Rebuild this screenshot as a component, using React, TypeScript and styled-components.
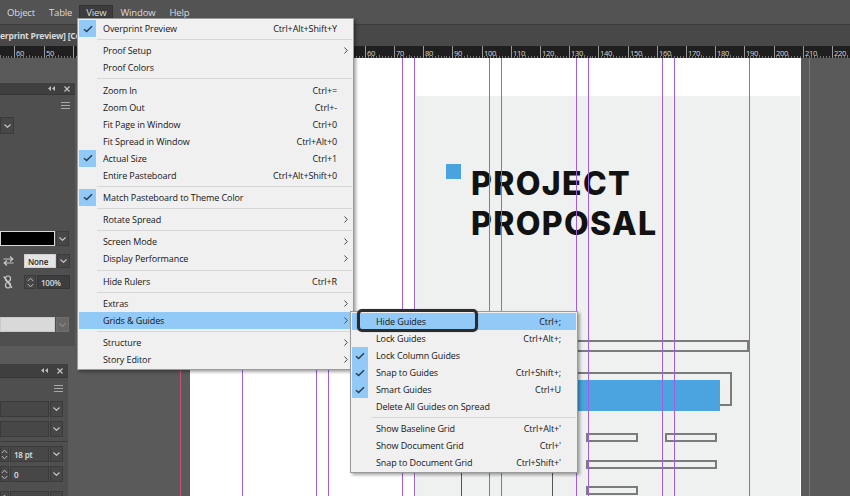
import React from "react";
import styled, { createGlobalStyle } from "styled-components";

const UI_FONT = `"Open Sans", "Noto Sans", "Liberation Sans", Arial, sans-serif`;

const GlobalStyle = createGlobalStyle`
  html, body { margin: 0; padding: 0; background: #535353; overflow: hidden; }
  #root { width: 850px; height: 496px; }
  * { box-sizing: border-box; }
`;

const Root = styled.div`
  position: relative;
  width: 850px;
  height: 496px;
  overflow: hidden;
  display: flex;
  flex-direction: column;
  font-family: ${UI_FONT};
`;

/* ---------- Menu bar ---------- */
const MenuBar = styled.div`
  height: 24px;
  flex: none;
  display: flex;
  align-items: center;
  background: #535353;
  color: #dcdcdc;
  font-size: 9.5px;
  letter-spacing: -0.15px;
`;
const MenuBarItem = styled.div<{ $active?: boolean }>`
  height: 16px;
  display: flex;
  align-items: center;
  padding: 0 6px;
  margin-top: 1px;
  border: 1px solid ${(p) => (p.$active ? "#333" : "transparent")};
  background: ${(p) => (p.$active ? "#3c3c3c" : "transparent")};
`;

/* ---------- Tab strip ---------- */
const TabStrip = styled.div`
  height: 22px;
  flex: none;
  background: #484848;
  border-top: 1px solid #3d3d3d;
  display: flex;
  align-items: center;
  overflow: hidden;
`;
const TabTitle = styled.span`
  font-weight: 700;
  font-size: 8.6px;
  letter-spacing: -0.25px;
  color: #d8d8d8;
  white-space: nowrap;
`;

/* ---------- Ruler ---------- */
const RulerBar = styled.div`
  height: 12px;
  flex: none;
  background: #1f1f1f;
  overflow: hidden;
  svg { display: block; }
`;

function Ruler() {
  const majors: React.ReactNode[] = [];
  const minors: React.ReactNode[] = [];
  for (let k = -6; k <= 22; k++) {
    const x = Math.round(189.5 + k * 29.2) + 0.5;
    majors.push(<line key={"l" + k} x1={x} x2={x} y1={0} y2={12} stroke="#9a9a9a" strokeWidth={1} />);
    // labels hidden beneath the open View menu are not drawn
    if (x > 60 && x < 356) continue;
    majors.push(
      <text key={"t" + k} x={x + 1.5} y={9.5} fontSize={7.6} fill="#d6d6d6" fontFamily={UI_FONT} letterSpacing={-0.35}>
        {Math.abs(k * 10)}
      </text>
    );
  }
  for (let m = -65; m <= 225; m++) {
    if (m % 10 === 0) continue;
    const x = Math.round(189.5 + m * 2.92) + 0.5;
    const h = m % 5 === 0 ? 3 : 2;
    minors.push(<line key={"m" + m} x1={x} x2={x} y1={12 - h} y2={12} stroke="#767676" strokeWidth={1} />);
  }
  return (
    <RulerBar>
      <svg width={850} height={12} shapeRendering="crispEdges">
        {minors}
        {majors}
      </svg>
    </RulerBar>
  );
}

/* ---------- Workspace / page ---------- */
const Workspace = styled.div`
  position: relative;
  flex: 1;
  display: flex;
  background: #5a5a5a;
  overflow: hidden;
`;
const Bleed = styled.div`
  margin-left: 180px;
  border-left: 1px solid #c4546f;
  border-right: 1px solid #c4546f;
  padding: 0 8px 0 9px;
  display: flex;
`;
const Page = styled.div`
  position: relative;
  width: 611px;
  background: #ffffff;
  display: flex;
  flex-direction: column;
`;
const GrayBlock = styled.div`
  position: relative;
  margin: 38px 1px 0 226px;
  flex: 1;
  background: #eff0f0;
`;
const Guide = styled.div<{ $x: number }>`
  position: absolute;
  top: 0;
  bottom: 0;
  left: ${(p) => p.$x}px;
  width: 1px;
  background: #9f5fe4;
  z-index: 3;
`;
const TitleRow = styled.div`
  display: flex;
  align-items: flex-start;
  padding: 68px 0 0 30px;
`;
const Square = styled.div`
  width: 15px;
  height: 15px;
  background: #4aa3df;
  flex: none;
`;
const Title = styled.h1`
  margin: 0 0 0 10px;
  font-family: Inter, "Liberation Sans", sans-serif;
  font-weight: 800;
  font-size: 32px;
  line-height: 40px;
  letter-spacing: 1.35px;
  color: #121212;
`;
const Frame = styled.div<{ $x: number; $y: number; $w: number; $h: number; $tone?: "fill" | "dark" }>`
  position: absolute;
  left: ${(p) => p.$x}px;
  top: ${(p) => p.$y}px;
  width: ${(p) => p.$w}px;
  height: ${(p) => p.$h}px;
  ${(p) =>
    p.$tone === "fill"
      ? "background: #4ba4df;"
      : p.$tone === "dark"
      ? "border: 1.5px solid #555;"
      : "border: 2px solid #7b7b7b;"}
`;

const guideXs = [52, 126, 138, 212, 224, 299, 311, 386, 398, 472, 484, 559];

/* ---------- Panels ---------- */
const Panel = styled.div<{ $top: number; $width: number; $height?: number }>`
  position: absolute;
  left: 0;
  top: ${(p) => p.$top}px;
  width: ${(p) => p.$width}px;
  ${(p) => (p.$height ? `height: ${p.$height}px;` : "bottom: 0;")}
  background: #4f4f4f;
  display: flex;
  flex-direction: column;
  z-index: 5;
`;
const PanelHeader = styled.div<{ $h: number }>`
  height: ${(p) => p.$h}px;
  flex: none;
  background: #3f3f3f;
  border-bottom: 1px solid #363636;
  display: flex;
  align-items: center;
  justify-content: flex-end;
  gap: 9px;
  padding-right: 5px;
`;
const PanelMenuRow = styled.div`
  height: 20px;
  flex: none;
  display: flex;
  align-items: center;
  justify-content: flex-end;
  padding-right: 5px;
`;
const PRow = styled.div<{ $mt: number; $h: number }>`
  display: flex;
  flex: none;
  margin-top: ${(p) => p.$mt}px;
  height: ${(p) => p.$h}px;
  gap: 1px;
`;
const PDivider = styled.div<{ $mt: number }>`
  margin-top: ${(p) => p.$mt}px;
  height: 1px;
  flex: none;
  background: #3c3c3c;
`;
const Field = styled.div<{ $w: number; $tone: "dark" | "light" | "black" | "pale" | "deep" }>`
  width: ${(p) => p.$w}px;
  flex: none;
  display: flex;
  align-items: center;
  padding-left: 3px;
  font-size: 8px;
  font-weight: 600;
  letter-spacing: -0.2px;
  ${(p) =>
    p.$tone === "light"
      ? "background: #e4e4e4; color: #2a2a2a; border: 1px solid #d0d0d0;"
      : p.$tone === "pale"
      ? "background: #d9d9d9; border: 1px solid #c9c9c9;"
      : p.$tone === "black"
      ? "background: #000; border: 1px solid #d8d8d8;"
      : p.$tone === "deep"
      ? "background: #3d3d3d; color: #dcdcdc; border: 1px solid #363636;"
      : "background: #474747; color: #e4e4e4; border: 1px solid #3a3a3a;"}
`;
const DropBtn = styled.div<{ $w: number; $muted?: boolean }>`
  width: ${(p) => p.$w}px;
  flex: none;
  display: flex;
  align-items: center;
  justify-content: center;
  background: ${(p) => (p.$muted ? "#676767" : "#474747")};
  border: 1px solid ${(p) => (p.$muted ? "#6e6e6e" : "#3b3b3b")};
  color: ${(p) => (p.$muted ? "#8a8a8a" : "#cfcfcf")};
`;
const Spinner = styled.div<{ $w: number }>`
  width: ${(p) => p.$w}px;
  flex: none;
  display: flex;
  align-items: center;
  justify-content: center;
  background: #474747;
  border: 1px solid #3b3b3b;
  color: #bdbdbd;
`;
const IconCell = styled.div`
  width: 23px;
  flex: none;
  display: flex;
  align-items: center;
  padding-left: 3px;
  color: #c8c8c8;
`;

const Chevron = () => (
  <svg width={7} height={4} viewBox="0 0 7 4">
    <polyline points="0.5,0.5 3.5,3.3 6.5,0.5" fill="none" stroke="currentColor" strokeWidth={1.1} />
  </svg>
);
const SpinIcon = () => (
  <svg width={7} height={11} viewBox="0 0 7 11">
    <polyline points="0.8,4 3.5,1.2 6.2,4" fill="none" stroke="currentColor" strokeWidth={1} />
    <polyline points="0.8,7 3.5,9.8 6.2,7" fill="none" stroke="currentColor" strokeWidth={1} />
  </svg>
);
const CollapseIcon = () => (
  <svg width={7} height={5} viewBox="0 0 7 5">
    <polygon points="3,0 3,5 0,2.5" fill="#bdbdbd" />
    <polygon points="7,0 7,5 4,2.5" fill="#bdbdbd" />
  </svg>
);
const CloseIcon = () => (
  <svg width={6} height={6} viewBox="0 0 6 6">
    <path d="M0.5 0.5 L5.5 5.5 M5.5 0.5 L0.5 5.5" stroke="#c4c4c4" strokeWidth={1.2} />
  </svg>
);
const HamburgerIcon = () => (
  <svg width={9} height={7} viewBox="0 0 9 7">
    <path d="M0 0.5 H9 M0 3.5 H9 M0 6.5 H9" stroke="#a8a8a8" strokeWidth={1} />
  </svg>
);
const SwapIcon = () => (
  <svg width={11} height={10} viewBox="0 0 11 10">
    <path d="M0.5 3 H9.5 M7 0.5 L9.8 3 L7 5.5" fill="none" stroke="currentColor" strokeWidth={1.2} />
    <path d="M10.5 7 H1.5 M4 4.5 L1.2 7 L4 9.5" fill="none" stroke="currentColor" strokeWidth={1.2} />
  </svg>
);
const UnlinkIcon = () => (
  <svg width={10} height={14} viewBox="0 0 10 14">
    <rect x={2.5} y={1} width={5} height={5.5} rx={2.4} fill="none" stroke="currentColor" strokeWidth={1.2} />
    <rect x={2.5} y={7.5} width={5} height={5.5} rx={2.4} fill="none" stroke="currentColor" strokeWidth={1.2} />
    <path d="M0.8 1.5 L9 12.8" stroke="currentColor" strokeWidth={1.3} />
  </svg>
);

/* ---------- Drop-down menus ---------- */
const MenuBox = styled.div<{ $x: number; $y: number; $w: number }>`
  position: absolute;
  left: ${(p) => p.$x}px;
  top: ${(p) => p.$y}px;
  width: ${(p) => p.$w}px;
  background: #f0f0f0;
  border: 1px solid #9a9a9a;
  box-shadow: 2px 2px 3px rgba(0, 0, 0, 0.35);
  padding: 1px;
  font-size: 9px;
  letter-spacing: -0.1px;
  color: #151515;
  z-index: 10;
`;
const MenuRow = styled.div<{ $active?: boolean }>`
  height: 17px;
  display: flex;
  align-items: center;
  background: ${(p) => (p.$active ? "#91c9f7" : "transparent")};
  white-space: nowrap;
`;
const CheckCell = styled.div<{ $w: number; $on?: boolean }>`
  width: ${(p) => p.$w}px;
  height: 17px;
  flex: none;
  display: flex;
  align-items: center;
  justify-content: center;
  background: ${(p) => (p.$on ? "#91c9f7" : "transparent")};
`;
const MenuLabel = styled.span<{ $pad: number }>`
  flex: 1;
  padding-left: ${(p) => p.$pad}px;
`;
const Shortcut = styled.span``;
const Trail = styled.div`
  width: 15px;
  flex: none;
  display: flex;
  align-items: center;
  justify-content: center;
  padding-left: 2px;
  color: #4a4a4a;
`;
const MenuSep = styled.div<{ $indent: number }>`
  height: 5.3px;
  display: flex;
  align-items: center;
  padding-left: ${(p) => p.$indent}px;
  &::after {
    content: "";
    flex: 1;
    height: 1px;
    background: #d6d6d6;
  }
`;
const Callout = styled.div`
  position: absolute;
  left: 357px;
  top: 309px;
  width: 121px;
  height: 23px;
  border: 3px solid #2c2c2c;
  border-radius: 5px;
  box-shadow: 0 0 1px rgba(0, 0, 0, 0.5);
  z-index: 12;
`;

const CheckMark = () => (
  <svg width={10} height={8} viewBox="0 0 10 8">
    <polyline points="1,4.2 3.6,6.6 9,1.2" fill="none" stroke="#2b3b4b" strokeWidth={1.4} />
  </svg>
);
const SubArrow = () => (
  <svg width={4} height={7} viewBox="0 0 4 7">
    <polyline points="0.5,0.5 3.3,3.5 0.5,6.5" fill="none" stroke="currentColor" strokeWidth={1} />
  </svg>
);

type Item = { label: string; sc?: string; checked?: boolean; sub?: boolean; active?: boolean } | "sep";

const viewMenu: Item[] = [
  { label: "Overprint Preview", sc: "Ctrl+Alt+Shift+Y", checked: true },
  "sep",
  { label: "Proof Setup", sub: true },
  { label: "Proof Colors" },
  "sep",
  { label: "Zoom In", sc: "Ctrl+=" },
  { label: "Zoom Out", sc: "Ctrl+-" },
  { label: "Fit Page in Window", sc: "Ctrl+0" },
  { label: "Fit Spread in Window", sc: "Ctrl+Alt+0" },
  { label: "Actual Size", sc: "Ctrl+1", checked: true },
  { label: "Entire Pasteboard", sc: "Ctrl+Alt+Shift+0" },
  "sep",
  { label: "Match Pasteboard to Theme Color", checked: true },
  "sep",
  { label: "Rotate Spread", sub: true },
  "sep",
  { label: "Screen Mode", sub: true },
  { label: "Display Performance", sub: true },
  "sep",
  { label: "Hide Rulers", sc: "Ctrl+R" },
  "sep",
  { label: "Extras", sub: true },
  { label: "Grids & Guides", sub: true, active: true },
  "sep",
  { label: "Structure", sub: true },
  { label: "Story Editor", sub: true },
];

const guidesMenu: Item[] = [
  { label: "Hide Guides", sc: "Ctrl+;", active: true },
  { label: "Lock Guides", sc: "Ctrl+Alt+;" },
  { label: "Lock Column Guides", checked: true },
  { label: "Snap to Guides", sc: "Ctrl+Shift+;", checked: true },
  { label: "Smart Guides", sc: "Ctrl+U", checked: true },
  { label: "Delete All Guides on Spread" },
  "sep",
  { label: "Show Baseline Grid", sc: "Ctrl+Alt+'" },
  { label: "Show Document Grid", sc: "Ctrl+'" },
  { label: "Snap to Document Grid", sc: "Ctrl+Shift+'" },
];

function Menu({
  items, x, y, w, checkW, pad, sepIndent,
}: { items: Item[]; x: number; y: number; w: number; checkW: number; pad: number; sepIndent: number }) {
  return (
    <MenuBox $x={x} $y={y} $w={w}>
      {items.map((it, i) =>
        it === "sep" ? (
          <MenuSep key={i} $indent={sepIndent} />
        ) : (
          <MenuRow key={i} $active={it.active}>
            <CheckCell $w={checkW} $on={it.checked}>{it.checked && <CheckMark />}</CheckCell>
            <MenuLabel $pad={pad}>{it.label}</MenuLabel>
            {it.sc && <Shortcut>{it.sc}</Shortcut>}
            <Trail>{it.sub && <SubArrow />}</Trail>
          </MenuRow>
        )
      )}
    </MenuBox>
  );
}

export default function App() {
  return (
    <Root>
      <GlobalStyle />
      <MenuBar>
        <MenuBarItem>Object</MenuBarItem>
        <MenuBarItem>Table</MenuBarItem>
        <MenuBarItem $active>View</MenuBarItem>
        <MenuBarItem>Window</MenuBarItem>
        <MenuBarItem>Help</MenuBarItem>
      </MenuBar>
      <TabStrip>
        <TabTitle>erprint Preview] [Converted]</TabTitle>
      </TabStrip>
      <Ruler />
      <Workspace>
        <Bleed>
          <Page>
            {guideXs.map((gx) => (
              <Guide key={gx} $x={gx} />
            ))}
            <GrayBlock>
              <TitleRow>
                <Square />
                <Title>
                  PROJECT
                  <br />
                  PROPOSAL
                </Title>
              </TitleRow>
              <Frame $x={14} $y={244} $w={319} $h={12} />
              <Frame $x={24} $y={276} $w={292} $h={34} />
              <Frame $x={14} $y={284} $w={290} $h={31} $tone="fill" />
              <Frame $x={45} $y={330} $w={92} $h={200} $tone="dark" />
              <Frame $x={170} $y={337} $w={52} $h={9} />
              <Frame $x={249} $y={337} $w={52} $h={9} />
              <Frame $x={170} $y={364} $w={131} $h={9} />
              <Frame $x={170} $y={390} $w={52} $h={9} />
            </GrayBlock>
          </Page>
        </Bleed>

        <Panel $top={25} $width={75} $height={263}>
          <PanelHeader $h={12}>
            <CollapseIcon />
            <CloseIcon />
          </PanelHeader>
          <PanelMenuRow>
            <HamburgerIcon />
          </PanelMenuRow>
          <PRow $mt={2} $h={17}>
            <DropBtn $w={14}><Chevron /></DropBtn>
          </PRow>
          <PRow $mt={97} $h={15}>
            <Field $w={55} $tone="black" />
            <DropBtn $w={13}><Chevron /></DropBtn>
          </PRow>
          <PRow $mt={8} $h={14}>
            <IconCell><SwapIcon /></IconCell>
            <Field $w={32} $tone="light">None</Field>
            <DropBtn $w={13}><Chevron /></DropBtn>
          </PRow>
          <PRow $mt={7} $h={14}>
            <IconCell><UnlinkIcon /></IconCell>
            <Spinner $w={12}><SpinIcon /></Spinner>
            <Field $w={33} $tone="deep">100%</Field>
          </PRow>
          <PRow $mt={28} $h={15}>
            <Field $w={55} $tone="pale" />
            <DropBtn $w={13} $muted><Chevron /></DropBtn>
          </PRow>
        </Panel>

        <Panel $top={306} $width={68}>
          <PanelHeader $h={14}>
            <CollapseIcon />
            <CloseIcon />
          </PanelHeader>
          <PanelMenuRow>
            <HamburgerIcon />
          </PanelMenuRow>
          <PRow $mt={3} $h={16}>
            <Field $w={49} $tone="dark" />
            <DropBtn $w={13}><Chevron /></DropBtn>
          </PRow>
          <PRow $mt={4} $h={16}>
            <Field $w={49} $tone="dark" />
            <DropBtn $w={13}><Chevron /></DropBtn>
          </PRow>
          <PDivider $mt={4} />
          <PRow $mt={4} $h={16}>
            <Spinner $w={9}><SpinIcon /></Spinner>
            <Field $w={39} $tone="dark">18 pt</Field>
            <DropBtn $w={13}><Chevron /></DropBtn>
          </PRow>
          <PRow $mt={4} $h={16}>
            <Spinner $w={9}><SpinIcon /></Spinner>
            <Field $w={39} $tone="dark">0</Field>
            <DropBtn $w={13}><Chevron /></DropBtn>
          </PRow>
          <PRow $mt={9} $h={16}>
            <Spinner $w={9}><SpinIcon /></Spinner>
            <Field $w={39} $tone="dark" />
            <DropBtn $w={13}><Chevron /></DropBtn>
          </PRow>
        </Panel>
      </Workspace>

      <Menu items={viewMenu} x={77} y={18} w={277} checkW={17} pad={7} sepIndent={18} />
      <Menu items={guidesMenu} x={350} y={311} w={228} checkW={16} pad={8} sepIndent={20} />
      <Callout />
    </Root>
  );
}
